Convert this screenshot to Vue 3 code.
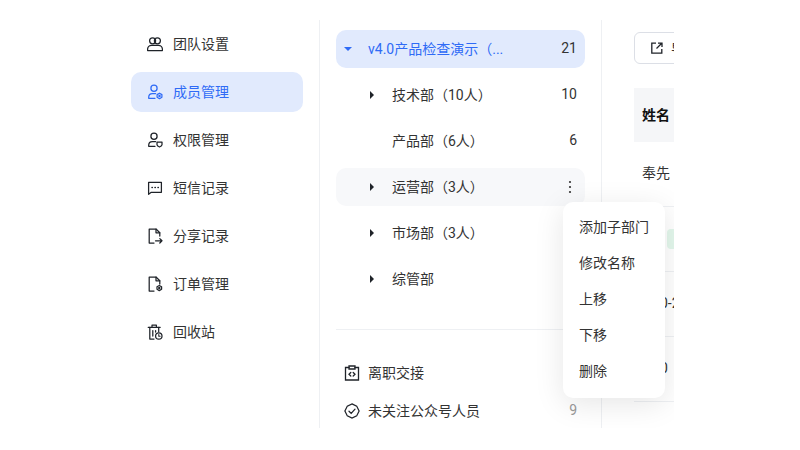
<script setup>
const nav = [
  { t: '团队设置', i: 'team' },
  { t: '成员管理', i: 'member', active: true },
  { t: '权限管理', i: 'perm' },
  { t: '短信记录', i: 'sms' },
  { t: '分享记录', i: 'share' },
  { t: '订单管理', i: 'order' },
  { t: '回收站', i: 'trash' },
]
const tree = [
  { t: '技术部（10人）', n: 10, arrow: true },
  { t: '产品部（6人）', n: 6 },
  { t: '运营部（3人）', arrow: true, hover: true },
  { t: '市场部（3人）', arrow: true },
  { t: '综管部', arrow: true },
]
const menu = ['添加子部门', '修改名称', '上移', '下移', '删除']
</script>

<template>
  <div class="page">
    <div class="frame">
      <aside class="nav">
        <div v-for="n in nav" :key="n.t" class="nav-item" :class="{ active: n.active }">
          <svg class="ico" viewBox="0 0 16 16" fill="none" stroke="currentColor" stroke-width="1.25" stroke-linecap="round" stroke-linejoin="round">
            <template v-if="n.i === 'team'">
              <circle cx="5.6" cy="4.800" r="3" /><circle cx="10.400" cy="4.800" r="3" />
              <path d="M.6 14.500v-1.200c0-2.300 1.800-4 4-4h6.800c2.200 0 4 1.700 4 4v1.200z" />
            </template>
            <template v-else-if="n.i === 'member'">
              <circle cx="7" cy="4.300" r="3.100" />
              <path d="M8 14.300H1.700v-1c0-2.100 1.600-3.700 3.700-3.700h3.200" />
              <path d="M12.500 9.200l2.400 1.400v2.700l-2.400 1.400-2.400-1.400v-2.700z" /><circle cx="12.500" cy="12" r=".6" />
            </template>
            <template v-else-if="n.i === 'perm'">
              <circle cx="7" cy="4.300" r="3.100" />
              <path d="M8 14.300H1.700v-1c0-2.100 1.600-3.700 3.700-3.700h3.200" />
              <path d="M10 10h5v2.800c0 1-1.100 1.700-2.500 2.200-1.400-.5-2.500-1.200-2.500-2.200z" />
            </template>
            <template v-else-if="n.i === 'sms'">
              <path d="M1.600 2.300h12.800v10H4.300l-2.700 2z" />
              <path d="M5 7.400h.3M8 7.400h.3M11 7.400h.3" stroke-width="1.500" />
            </template>
            <template v-else-if="n.i === 'share'">
              <path d="M7 15H2.200V1h6.800l3.800 3.800v3.200" /><path d="M9 1v3.800h3.800" />
              <path d="M8.500 12.800h6.500M12.800 10.600l2.200 2.200-2.200 2.200" />
            </template>
            <template v-else-if="n.i === 'order'">
              <path d="M7 15H2.200V1h6.800l3.800 3.800v3.200" /><path d="M9 1v3.800h3.800" />
              <path d="M12.300 9.500l2.300 1.300v2.500l-2.300 1.300-2.300-1.300v-2.500z" /><circle cx="12.300" cy="12" r=".6" />
            </template>
            <template v-else>
              <path d="M1.200 3.300h12M5 3.300V1.200h4.400v2.100" />
              <path d="M2.800 3.300V15h4.200M11.700 3.300v4.500M5.800 6.500v5.500M8.600 6.500v1.500" />
              <circle cx="11.800" cy="12" r="3.200" /><path d="M11.800 10.500v1.700h1.300" stroke-width="1.100" />
            </template>
          </svg>
          <span class="txt">{{ n.t }}</span>
        </div>
      </aside>

      <section class="tree">
        <div class="row root">
          <span class="caret-down"></span>
          <span class="label root-label txt">v4.0产品检查演示（...</span>
          <span class="num txt">21</span>
        </div>
        <div v-for="d in tree" :key="d.t" class="row child" :class="{ hover: d.hover }">
          <span class="arrow-slot"><i v-if="d.arrow" class="caret-right"></i></span>
          <span class="label txt">{{ d.t }}</span>
          <span v-if="d.n" class="num txt">{{ d.n }}</span>
          <svg v-if="d.hover" class="more" viewBox="0 0 4 14" fill="#333"><circle cx="2" cy="2" r="1.100" /><circle cx="2" cy="7" r="1.100" /><circle cx="2" cy="12" r="1.100" /></svg>
        </div>
        <div class="divider"></div>
        <div class="foot-row foot-first">
          <svg class="ico" viewBox="0 0 16 16" fill="none" stroke="#1f2329" stroke-width="1.300" stroke-linejoin="miter" stroke-linecap="round">
            <path d="M5 2.500H1.500v12.500h13V2.500H11" /><path d="M5 1h6v3H5z" /><path d="M6.800 7.500L5 9.300l1.800 1.700M9.200 7.500L11 9.300l-1.800 1.700" />
          </svg>
          <span class="label txt">离职交接</span>
        </div>
        <div class="foot-row">
          <svg class="ico" viewBox="0 0 16 16" fill="none" stroke="#1f2329" stroke-width="1.250" stroke-linejoin="miter" stroke-linecap="round">
            <path d="M8 .9l4.700 2.200 2.400 4.900-2.400 4.900L8 15.100l-4.700-2.200L.9 8l2.400-4.900z" /><path d="M5 8.200l2.200 2.200L11 6.200" />
          </svg>
          <span class="label txt">未关注公众号人员</span>
          <span class="num muted txt">9</span>
        </div>
      </section>

      <section class="content">
        <div class="btn">
          <svg class="ext" viewBox="0 0 12 12" fill="none" stroke="#1f2329" stroke-width="1.300"><path d="M5 1.200H.8v10h10V7" /><path d="M7 1.200h4V5M11 1L5.500 6.500" /></svg>
          <span class="btn-text">导出</span>
        </div>
        <div class="thead">姓名</div>
        <div class="cell name-cell">奉先</div>
        <div class="cell line"><span class="tag"></span></div>
        <div class="cell line second">0-2</div>
        <div class="cell line second">0</div>
        <div class="cell line tail">奉先</div>
      </section>

      <div class="menu">
        <div v-for="m in menu" :key="m" class="menu-item">{{ m }}</div>
      </div>
    </div>
  </div>
</template>

<style>
html, body { margin: 0; background: #fff; }
</style>

<style scoped>
.page {
  width: 800px;
  height: 450px;
  overflow: hidden;
  box-sizing: border-box;
  padding: 20px 0 0 131px;
  background: #fff;
  font-family: Roboto, "Noto Sans CJK SC", sans-serif;
  font-size: 14px;
  color: #333;
}
.frame {
  position: relative;
  width: 543px;
  height: 408px;
  overflow: hidden;
  display: flex;
}
.txt { margin-bottom: 2px; }
.nav {
  width: 189px;
  box-sizing: border-box;
  padding: 4px 16px 0 0;
  border-right: 1px solid #eef0f3;
  display: flex;
  flex-direction: column;
  gap: 8px;
  flex: none;
}
.nav-item {
  height: 40px;
  flex: none;
  box-sizing: border-box;
  padding-left: 16px;
  display: flex;
  align-items: center;
  gap: 10px;
  border-radius: 10px;
  color: #333;
}
.nav-item.active { background: #e1eafd; color: #2f6bf6; }
.ico { width: 16px; height: 16px; flex: none; color: #1f2329; }
.nav-item.active .ico { color: #2f6bf6; }
.tree {
  width: 282px;
  box-sizing: border-box;
  padding: 10px 16px 0;
  border-right: 1px solid #eef0f3;
  flex: none;
}
.row {
  height: 38px;
  display: flex;
  align-items: center;
  border-radius: 10px;
  padding-right: 8px;
}
.row + .row { margin-top: 8px; }
.root { background: #e1eafd; padding-left: 8px; }
.caret-down {
  width: 0; height: 0;
  border-left: 4px solid transparent;
  border-right: 4px solid transparent;
  border-top: 4px solid #2f6bf6;
  margin-right: 16px;
}
.root-label { color: #2f6bf6; }
.label { flex: 1; white-space: nowrap; }
.num { color: #333; }
.muted { color: #999; }
.child { padding-left: 34px; }
.hover { background: #f7f8fa; }
.arrow-slot { width: 22px; flex: none; display: flex; align-items: center; }
.caret-right {
  width: 0; height: 0;
  border-top: 4px solid transparent;
  border-bottom: 4px solid transparent;
  border-left: 4px solid #1f2329;
}
.more { width: 4px; height: 14px; margin-right: 5px; }
.divider { height: 1px; background: #eef0f3; margin-top: 31px; }
.foot-row {
  height: 38px;
  padding: 0 8px;
  display: flex;
  align-items: center;
  gap: 8px;
}
.foot-first { margin-top: 24px; }
.content {
  flex: 1;
  min-width: 0;
  overflow: hidden;
  padding: 12px 0 0 32px;
  white-space: nowrap;
}
.btn {
  width: 120px;
  height: 32px;
  box-sizing: border-box;
  border: 1px solid #dcdfe6;
  border-radius: 6px;
  display: flex;
  align-items: center;
  padding-left: 16px;
  gap: 8px;
}
.ext { width: 12px; height: 12px; flex: none; }
.thead {
  margin-top: 24px;
  width: 120px;
  height: 54px;
  line-height: 54px;
  padding-left: 8px;
  box-sizing: border-box;
  background: #f5f6f8;
  font-weight: 700;
  color: #111;
}
.cell {
  width: 120px;
  height: 65px;
  line-height: 63px;
  padding-left: 8px;
  box-sizing: border-box;
  color: #333;
}
.name-cell { height: 64px; }
.line { border-top: 1px solid #eef0f3; }
.tail { line-height: 67px; }
.tag {
  display: inline-block;
  width: 60px;
  height: 20px;
  margin-left: 25px;
  background: #e3f7ec;
  border-radius: 4px;
  vertical-align: middle;
}
.second { padding-left: 26px; }
.menu {
  position: absolute;
  left: 432px;
  top: 182px;
  width: 102px;
  height: 196px;
  box-sizing: border-box;
  padding: 8px 0;
  background: #fff;
  border-radius: 10px;
  box-shadow: 0 6px 30px rgba(0, 0, 0, .1);
}
.menu-item { height: 36px; line-height: 34px; padding-left: 16px; color: #333; white-space: nowrap; }
</style>
